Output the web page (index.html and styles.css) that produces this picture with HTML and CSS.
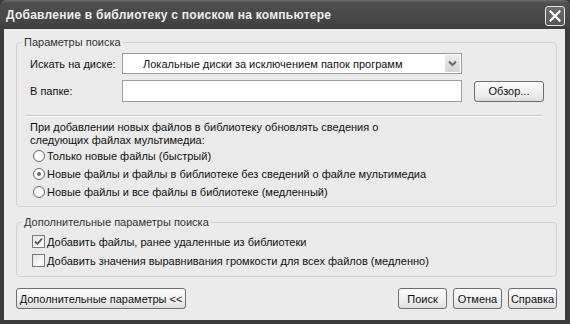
FILE: index.html
```html
<!DOCTYPE html>
<html lang="ru">
<head>
<meta charset="utf-8">
<link rel="stylesheet" href="styles.css">
</head>
<body>
<div class="window">
  <div class="titlebar">
    <span class="title">Добавление в библиотеку с поиском на компьютере</span>
    <span class="close"><svg width="12" height="12" viewBox="0 0 12 12"><path d="M1.5 1.5 L10.5 10.5 M10.5 1.5 L1.5 10.5" stroke="#fff" stroke-width="2.2" stroke-linecap="square"/></svg></span>
  </div>
  <div class="body">
    <div class="group g1">
      <span class="legend">Параметры поиска</span>
      <div class="row r1">
        <span class="label">Искать на диске:</span>
        <div class="select">
          <span class="select-text">Локальные диски за исключением папок программ</span>
          <span class="arrow"><svg width="9" height="7" viewBox="0 0 9 7"><path d="M1 1.5 L4.5 5 L8 1.5" fill="none" stroke="#6a6a6a" stroke-width="2"/></svg></span>
        </div>
      </div>
      <div class="row r2">
        <span class="label">В папке:</span>
        <div class="input"></div>
        <span class="btn browse">Обзор...</span>
      </div>
      <div class="sep"></div>
      <p class="desc">При добавлении новых файлов в библиотеку обновлять сведения о<br>следующих файлах мультимедиа:</p>
      <div class="opt"><span class="radio"></span>Только новые файлы (быстрый)</div>
      <div class="opt"><span class="radio on"></span>Новые файлы и файлы в библиотеке без сведений о файле мультимедиа</div>
      <div class="opt"><span class="radio"></span>Новые файлы и все файлы в библиотеке (медленный)</div>
    </div>
    <div class="group g2">
      <span class="legend">Дополнительные параметры поиска</span>
      <div class="chk-row"><span class="check on"><svg width="9" height="9" viewBox="0 0 9 9"><path d="M1 4.5 L3.5 7 L8 1.5" fill="none" stroke="#555" stroke-width="1.8"/></svg></span>Добавить файлы, ранее удаленные из библиотеки</div>
      <div class="chk-row"><span class="check"></span>Добавить значения выравнивания громкости для всех файлов (медленно)</div>
    </div>
    <div class="buttons">
      <span class="btn more">Дополнительные параметры &lt;&lt;</span>
      <span class="spacer"></span>
      <span class="btn small">Поиск</span>
      <span class="btn small">Отмена</span>
      <span class="btn small">Справка</span>
    </div>
  </div>
</div>
</body>
</html>
```

FILE: styles.css
```css
html, body {
  margin: 0;
  padding: 0;
  background: #3a3a3a;
}
body {
  width: 570px;
  height: 324px;
  overflow: hidden;
  font-family: "Liberation Sans", Arial, sans-serif;
  font-size: 11px;
  color: #111;
}
.window {
  width: 570px;
  height: 324px;
  display: flex;
  flex-direction: column;
  background: #3c3c3c;
}
.titlebar {
  height: 29px;
  flex: none;
  display: flex;
  align-items: center;
  padding: 0 5px 0 6px;
  background: linear-gradient(#6a6a6a 0px, #4e4e4e 3px, #484848 18px, #3e3e3e 29px);
  border-radius: 6px 6px 0 0;
}
.title {
  flex: 1;
  color: #eeeeee;
  font-weight: bold;
  font-size: 12px;
  letter-spacing: 0.25px;
  padding-top: 1px;
}
.close {
  width: 18px;
  height: 18px;
  margin-top: 2px;
  border: 1px solid #e6e6e6;
  border-radius: 3px;
  background: linear-gradient(#6c6c6c, #555);
  display: flex;
  align-items: center;
  justify-content: center;
}
.body {
  flex: 1;
  margin: 0 5px 4px 4px;
  background: #ebebeb;
  padding: 0 8px 0 12px;
  display: flex;
  flex-direction: column;
}
.group {
  position: relative;
  border: 1px solid #d2d2d2;
  border-radius: 4px;
  background: #eaeaea;
}
.legend {
  position: absolute;
  top: -7px;
  left: 5px;
  padding: 0 2px;
  line-height: 13px;
  background: #ebebeb;
  color: #333;
}
.g1 {
  margin-top: 13px;
  padding: 10px 0 5px 13px;
}
.row {
  display: flex;
  align-items: center;
}
.r1 { height: 21px; }
.r2 { height: 22px; margin-top: 6px; }
.label {
  width: 92px;
  flex: none;
}
.select, .input {
  width: 338px;
  flex: none;
  border: 1px solid #9c9c9c;
  background: #fff;
}
.select {
  height: 19px;
  display: flex;
  align-items: center;
}
.select-text {
  flex: 1;
  padding-left: 20px;
}
.arrow {
  width: 15px;
  height: 17px;
  margin-right: 1px;
  background: linear-gradient(#ececec, #d4d4d4);
  border-radius: 2px;
  display: flex;
  align-items: center;
  justify-content: center;
}
.input {
  height: 20px;
}
.btn {
  display: flex;
  align-items: center;
  justify-content: center;
  height: 19px;
  border: 1px solid #6e6e6e;
  border-radius: 3px;
  background: linear-gradient(#fbfbfb, #ececec 70%, #dcdcdc);
  color: #111;
  white-space: nowrap;
}
.browse {
  width: 68px;
  margin-left: 12px;
}
.sep {
  height: 1px;
  background: #c8c8c8;
  border-bottom: 1px solid #fafafa;
  margin: 13px 0 0 -5px;
  width: 518px;
}
.desc {
  margin: 4px 0 0;
  line-height: 13px;
}
.opt {
  height: 18px;
  display: flex;
  align-items: center;
  padding-left: 3px;
}
.radio {
  width: 10px;
  height: 10px;
  border: 1px solid #6a6a6a;
  border-radius: 50%;
  background: radial-gradient(#ffffff 50%, #e2e2e2);
  margin-right: 2px;
  position: relative;
  flex: none;
}
.radio.on::after {
  content: "";
  position: absolute;
  left: 3px;
  top: 3px;
  width: 4px;
  height: 4px;
  border-radius: 50%;
  background: #6a6a6a;
}
.g2 {
  margin-top: 15px;
  padding: 9px 0 6px 15px;
}
.chk-row {
  height: 19px;
  display: flex;
  align-items: center;
}
.check {
  width: 11px;
  height: 11px;
  border: 1px solid #7a7a7a;
  background: linear-gradient(135deg, #e4e4e4, #ffffff);
  margin-right: 2px;
  display: flex;
  align-items: center;
  justify-content: center;
  flex: none;
}
.buttons {
  margin-top: 11px;
  display: flex;
  align-items: center;
}
.more {
  width: 168px;
}
.spacer { flex: 1; }
.small {
  width: 47px;
  margin-left: 6px;
}
```
